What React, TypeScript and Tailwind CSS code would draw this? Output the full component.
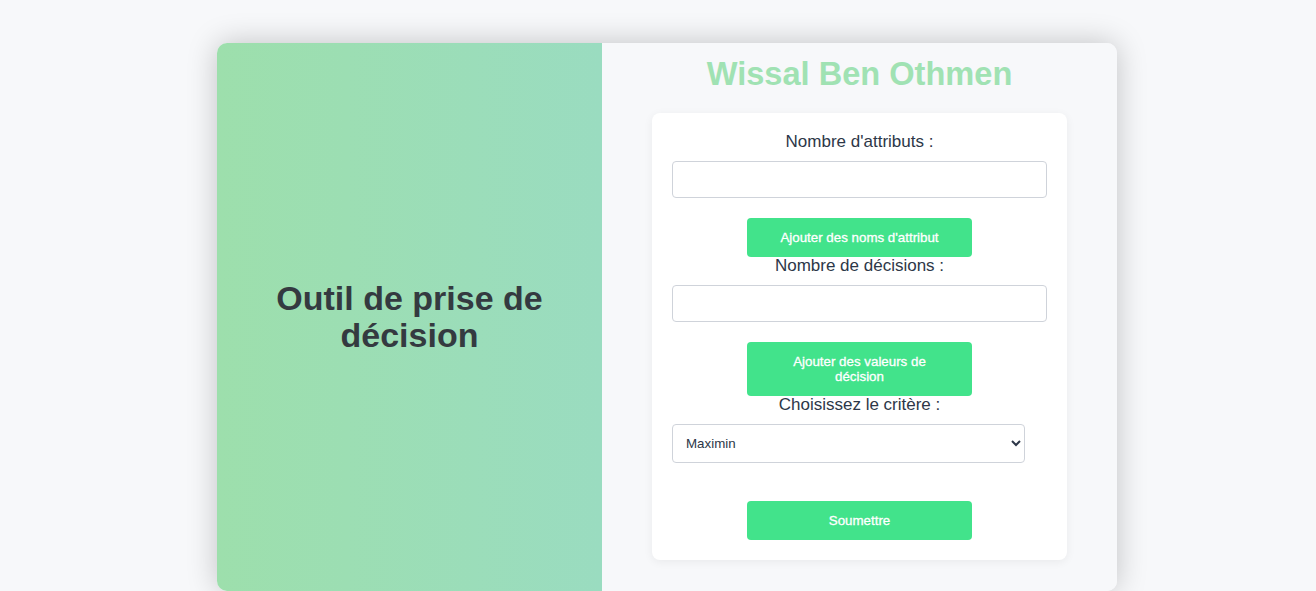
import React, { useState } from "react";

export default function App() {
  const [attrs, setAttrs] = useState("");
  const [decisions, setDecisions] = useState("");
  const [critere, setCritere] = useState("maximin");

  const btn =
    "w-[225px] mx-auto block bg-[#42e38b] text-white text-[13.333px] leading-[15px] [-webkit-text-stroke:0.3px_#ffffff] py-3 rounded-[4px] hover:bg-[#36c978]";
  const label = "block text-[17px] leading-[18px] text-[#2d3748]";
  const field =
    "mt-[10px] block w-full h-[37px] border border-[#cfd3da] rounded-[4px] px-3 outline-none";

  return (
    <div
      className="min-h-screen bg-[#f7f8fa] pt-[43px] pl-[18px]"
      style={{ fontFamily: '"Liberation Sans", Arial, sans-serif' }}
    >
      <div className="mx-auto flex w-[900px] h-[548px] rounded-[10px] shadow-[0_0_30px_rgba(0,0,0,0.22)]">
        {/* left */}
        <div className="w-[385px] rounded-l-[10px] bg-gradient-to-r from-[#9ddfac] to-[#9adcc0] flex items-center justify-center">
          <h1 className="text-[34px] leading-[37px] font-bold text-[#343a40] text-center px-8">
            Outil de prise de décision
          </h1>
        </div>

        {/* right */}
        <div className="flex-1 rounded-r-[10px] bg-[#f7f8fa] pt-[12px]">
          <h2 className="text-[32.6px] leading-[37px] font-bold text-[#a0e2b3] text-center mb-[21px]">
            Wissal Ben Othmen
          </h2>

          <div className="mx-auto w-[415px] bg-white rounded-[8px] p-5 shadow-[0_2px_10px_rgba(0,0,0,0.06)] text-center">
            <label className={label}>Nombre d'attributs :</label>
            <input
              type="number"
              value={attrs}
              onChange={(e) => setAttrs(e.target.value)}
              className={field}
            />
            <button className={btn + " mt-5"}>Ajouter des noms d'attribut</button>

            <label className={label}>Nombre de décisions :</label>
            <input
              type="number"
              value={decisions}
              onChange={(e) => setDecisions(e.target.value)}
              className={field}
            />
            <button className={btn + " mt-5"}>
              <span className="block w-[150px] mx-auto">Ajouter des valeurs de décision</span>
            </button>

            <label className={label}>Choisissez le critère :</label>
            <select
              value={critere}
              onChange={(e) => setCritere(e.target.value)}
              className="mt-[10px] block w-[353px] h-[39px] border border-[#cfd3da] rounded-[4px] pl-[9px] pr-2 text-[13.333px] text-[#2d3748] bg-white outline-none"
            >
              <option value="maximin">Maximin</option>
              <option value="maximax">Maximax</option>
              <option value="hurwicz">Hurwicz</option>
              <option value="laplace">Laplace</option>
              <option value="savage">Savage</option>
            </select>

            <button className={btn + " mt-[38px]"}>Soumettre</button>
          </div>
        </div>
      </div>
    </div>
  );
}
